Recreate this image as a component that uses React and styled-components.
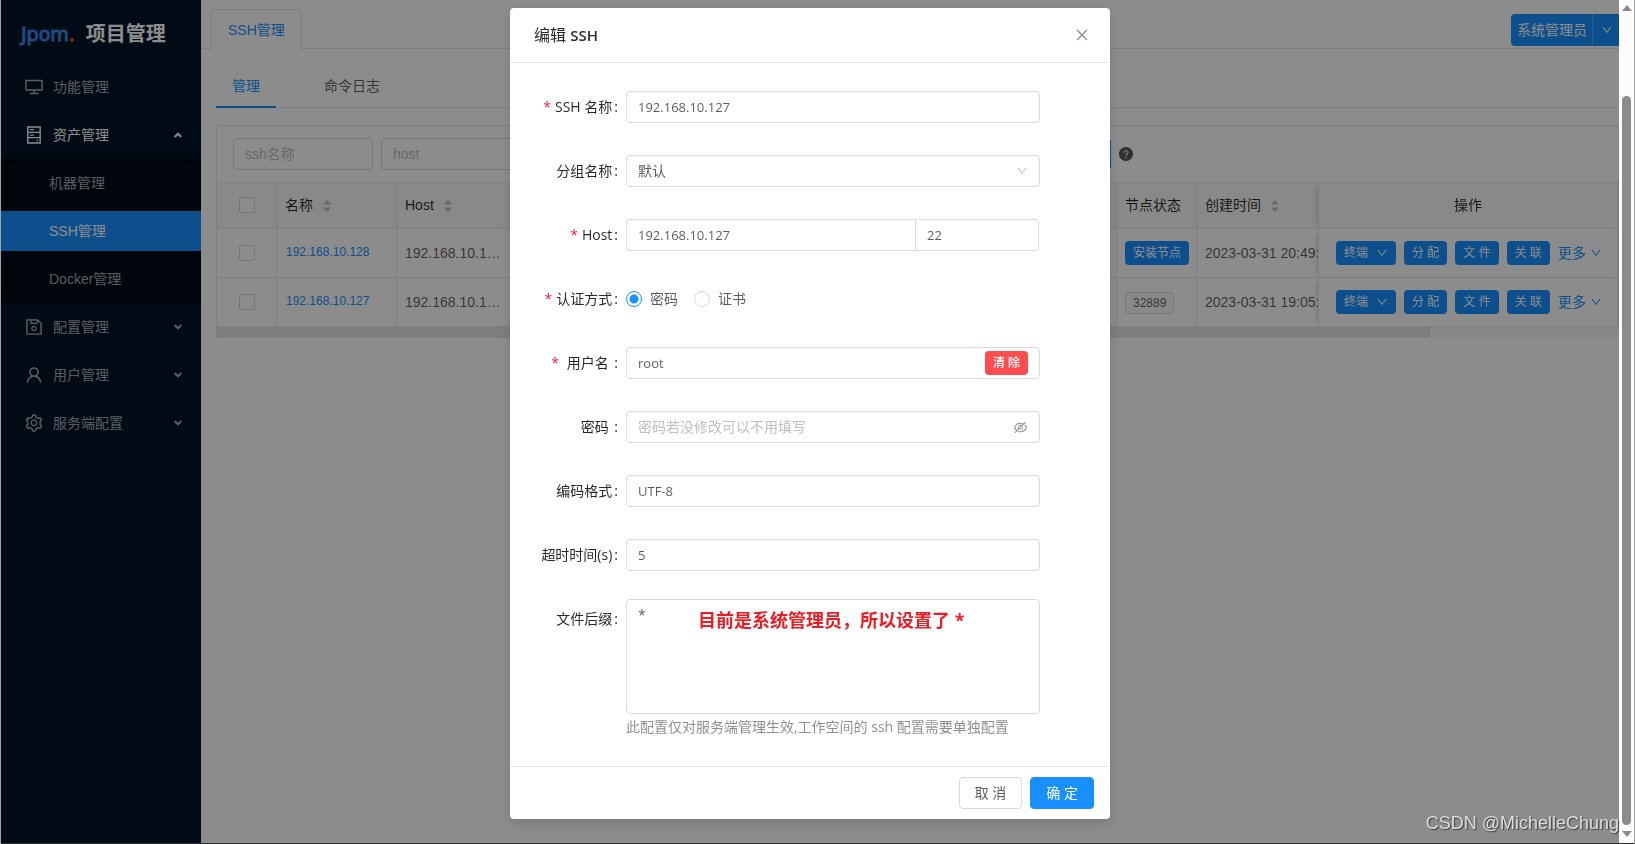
import React, { useState } from "react";
import styled, { createGlobalStyle } from "styled-components";
import {
  AiOutlineClose,
  AiOutlineDesktop,
  AiOutlineDown,
  AiOutlineEyeInvisible,
  AiOutlineHdd,
  AiOutlineSave,
  AiOutlineSetting,
  AiOutlineUser,
  AiFillQuestionCircle,
} from "react-icons/ai";

const menus = [
  { name: "功能管理", icon: AiOutlineDesktop },
  {
    name: "资产管理",
    icon: AiOutlineHdd,
    open: true,
    children: ["机器管理", "SSH管理", "Docker管理"],
  },
  { name: "配置管理", icon: AiOutlineSave, children: [] },
  { name: "用户管理", icon: AiOutlineUser, children: [] },
  { name: "服务端配置", icon: AiOutlineSetting, children: [] },
];

const machines = [
  { name: "192.168.10.128", host: "192.168.10.128", time: "2023-03-31 20:49:12" },
  { name: "192.168.10.127", host: "192.168.10.127", port: "32889", time: "2023-03-31 19:05:36" },
];

const Arrow = ({ up }) => (
  <ArrowSvg viewBox="0 0 8 6" width="8" height="6" fill="none" stroke="currentColor" strokeWidth="2">
    <path d={up ? "M0.7 5 L4 1.7 L7.3 5" : "M0.7 1 L4 4.3 L7.3 1"} />
  </ArrowSvg>
);

const Sorter = () => (
  <SorterSvg viewBox="0 0 8 14" width="8" height="14" fill="#bfbfbf">
    <path d="M4 1 L8 5.5 H0 Z M4 13 L8 8.5 H0 Z" />
  </SorterSvg>
);

const Sidebar = () => (
  <Side>
    <Brand>
      <Logo>
        Jpom<i>.</i>
      </Logo>
      <BrandTitle>项目管理</BrandTitle>
    </Brand>
    <Menu>
      {menus.map(({ name, icon: Icon, open, children }) => (
        <React.Fragment key={name}>
          <MenuItem type="button" $active={open}>
            <Icon size={20} />
            <span>{name}</span>
            {children && <Arrow up={open} />}
          </MenuItem>
          {open && (
            <SubMenu>
              {children.map((child) => (
                <SubItem href="#" key={child} $active={child === "SSH管理"}>
                  {child}
                </SubItem>
              ))}
            </SubMenu>
          )}
        </React.Fragment>
      ))}
    </Menu>
  </Side>
);

const MachineTable = () => (
  <TableBox>
    <Toolbar>
      <SearchInput aria-label="ssh名称" placeholder="ssh名称" />
      <SearchInput aria-label="host" placeholder="host" />
      <ToolbarEnd>
        <ToolButton type="button" aria-label="搜索" />
        <AiFillQuestionCircle size={16} />
      </ToolbarEnd>
    </Toolbar>
    <Scroller>
      <Table>
        <colgroup>
          <col width="60" />
          <col width="120" />
          <col width="120" />
          <col width="600" />
          <col width="80" />
          <col width="180" />
          <col width="299" />
        </colgroup>
        <thead>
          <tr>
            <Th $center>
              <CheckBox aria-label="全选" />
            </Th>
            <Th>
              名称
              <Sorter />
            </Th>
            <Th>
              Host
              <Sorter />
            </Th>
            <Th />
            <Th>节点状态</Th>
            <Th>
              创建时间
              <Sorter />
            </Th>
            <Th $center $fixed>
              操作
            </Th>
          </tr>
        </thead>
        <tbody>
          {machines.map((m) => (
            <tr key={m.name}>
              <Td $center>
                <CheckBox aria-label={m.name} />
              </Td>
              <Td>
                <NameLink href="#">{m.name}</NameLink>
              </Td>
              <Td $ellipsis>{m.host}</Td>
              <Td />
              <Td>{m.port ? <Tag>{m.port}</Tag> : <SmallButton type="button">安装节点</SmallButton>}</Td>
              <Td>{m.time}</Td>
              <Td $fixed>
                <Actions>
                  <SmallButton type="button">
                    终端
                    <AiOutlineDown size={12} />
                  </SmallButton>
                  <SmallButton type="button">分 配</SmallButton>
                  <SmallButton type="button">文 件</SmallButton>
                  <SmallButton type="button">关 联</SmallButton>
                  <More href="#">
                    更多
                    <AiOutlineDown size={12} />
                  </More>
                </Actions>
              </Td>
            </tr>
          ))}
        </tbody>
      </Table>
    </Scroller>
    <HScroll>
      <HThumb />
    </HScroll>
  </TableBox>
);

const FormItem = ({ label, id, required, children }) => (
  <Item>
    <Label htmlFor={id} $required={required}>
      {label}
    </Label>
    <Control>{children}</Control>
  </Item>
);

const EditModal = () => {
  const [auth, setAuth] = useState("PASS");

  return (
    <Modal role="dialog" aria-labelledby="title">
      <ModalHeader>
        <ModalTitle id="title">
          编辑 <b>SSH</b>
        </ModalTitle>
        <CloseButton type="button" aria-label="关闭">
          <AiOutlineClose size={16} />
        </CloseButton>
      </ModalHeader>
      <ModalBody>
        <FormItem label="SSH 名称" id="name" required>
          <Input id="name" defaultValue="192.168.10.127" />
        </FormItem>
        <FormItem label="分组名称" id="group">
          <Select id="group">
            <option>默认</option>
          </Select>
          <Suffix $faint>
            <AiOutlineDown size={12} />
          </Suffix>
        </FormItem>
        <FormItem label="Host" id="host" required>
          <HostGroup>
            <Input id="host" defaultValue="192.168.10.127" />
            <Input aria-label="端口" defaultValue="22" />
          </HostGroup>
        </FormItem>
        <FormItem label="认证方式" id="pass" required>
          <RadioLabel>
            <Radio id="pass" name="auth" checked={auth === "PASS"} onChange={() => setAuth("PASS")} />
            密码
          </RadioLabel>
          <RadioLabel>
            <Radio name="auth" checked={auth === "PUBKEY"} onChange={() => setAuth("PUBKEY")} />
            证书
          </RadioLabel>
        </FormItem>
        <FormItem label=" 用户名 " id="user" required>
          <Input id="user" defaultValue="root" />
          <Suffix>
            <SmallButton type="button" $danger>
              清 除
            </SmallButton>
          </Suffix>
        </FormItem>
        <FormItem label="密码 " id="password">
          <Input id="password" type="password" placeholder="密码若没修改可以不用填写" />
          <Suffix>
            <AiOutlineEyeInvisible size={15} />
          </Suffix>
        </FormItem>
        <FormItem label="编码格式" id="charset">
          <Input id="charset" defaultValue="UTF-8" />
        </FormItem>
        <FormItem label="超时时间(s)" id="timeout">
          <Input id="timeout" defaultValue="5" />
        </FormItem>
        <FormItem label="文件后缀" id="suffix">
          <TextArea id="suffix" defaultValue="*" />
          <Note>目前是系统管理员，所以设置了 *</Note>
          <Hint>此配置仅对服务端管理生效,工作空间的 ssh 配置需要单独配置</Hint>
        </FormItem>
      </ModalBody>
      <ModalFooter>
        <Button type="button">取 消</Button>
        <Button type="button" $primary>
          确 定
        </Button>
      </ModalFooter>
    </Modal>
  );
};

const App = () => (
  <Frame>
    <GlobalStyle />
    <Page>
      <Sidebar />
      <Main>
        <TopBar>
          <CardTab type="button">SSH管理</CardTab>
          <UserGroup>
            <UserButton type="button">系统管理员</UserButton>
            <UserButton type="button" $arrow aria-label="展开">
              <AiOutlineDown size={12} />
            </UserButton>
          </UserGroup>
        </TopBar>
        <Content>
          <Tabs>
            <Tab type="button" $active>
              管理
            </Tab>
            <Tab type="button">命令日志</Tab>
          </Tabs>
          <MachineTable />
        </Content>
      </Main>
      <Mask>
        <EditModal />
      </Mask>
      <Watermark>CSDN @MichelleChung</Watermark>
    </Page>
    <VScroll>
      <svg viewBox="0 0 10 6" width="10" height="6" fill="#8b8b8b">
        <path d="M5 0 L10 6 H0 Z" />
      </svg>
      <VThumb />
      <svg viewBox="0 0 10 6" width="10" height="6" fill="#8b8b8b">
        <path d="M5 6 L10 0 H0 Z" />
      </svg>
    </VScroll>
  </Frame>
);

const GlobalStyle = createGlobalStyle`
  * {
    box-sizing: border-box;
  }
  body {
    margin: 0;
    font-family: "Liberation Sans", "Noto Sans CJK SC", sans-serif;
    font-size: 14px;
    line-height: 22px;
    color: rgba(0, 0, 0, 0.65);
  }
  button, input, select, textarea {
    font: inherit;
    color: inherit;
    margin: 0;
  }
  button {
    cursor: pointer;
  }
  a {
    text-decoration: none;
  }
`;

const Frame = styled.div`
  display: flex;
  height: 100vh;
  border: solid #a3a3a3;
  border-width: 0 1px 0 1px;
  overflow: hidden;
  box-shadow: inset 0 -1px #2e2c30;
  padding-bottom: 1px;
`;

const Page = styled.div`
  position: relative;
  display: flex;
  flex: 1;
  min-width: 0;
  background: #fff;
`;

/* sidebar */

const Side = styled.aside`
  width: 200px;
  flex-shrink: 0;
  background: #001529;
`;

const Brand = styled.div`
  display: flex;
  align-items: center;
  gap: 11px;
  height: 63px;
  padding: 4px 20px 0;
`;

const Logo = styled.span`
  font-family: "DejaVu Sans", sans-serif;
  font-size: 19px;
  -webkit-text-stroke: 1px;
  color: #3d87e8;
  i {
    font-style: normal;
    color: #e8590c;
  }
`;

const BrandTitle = styled.h1`
  margin: 0;
  font-size: 20px;
  font-weight: 700;
  color: #fff;
  white-space: nowrap;
`;

const Menu = styled.nav`
  display: flex;
  flex-direction: column;
`;

const MenuItem = styled.button`
  display: flex;
  align-items: center;
  gap: 9px;
  width: 100%;
  height: 40px;
  margin: 4px 0;
  padding: 0 19px 0 23px;
  border: none;
  background: none;
  text-align: left;
  color: ${({ $active }) => ($active ? "#fff" : "rgba(255, 255, 255, 0.65)")};
`;

const ArrowSvg = styled.svg`
  margin-left: auto;
`;

const SubMenu = styled.div`
  display: flow-root;
  background: #000c17;
  box-shadow: inset 0 2px 8px rgba(0, 0, 0, 0.45);
`;

const SubItem = styled.a`
  display: block;
  height: 40px;
  margin: 4px 0 8px;
  padding-left: 48px;
  line-height: 40px;
  color: ${({ $active }) => ($active ? "#fff" : "rgba(255, 255, 255, 0.65)")};
  background: ${({ $active }) => ($active ? "#1890ff" : "none")};
  &:last-child {
    margin-bottom: 4px;
  }
`;

/* page header and tabs */

const Main = styled.main`
  flex: 1;
  min-width: 0;
`;

const TopBar = styled.header`
  display: flex;
  align-items: flex-end;
  justify-content: space-between;
  height: 49px;
  padding-left: 10px;
  border-bottom: 1px solid #e8e8e8;
`;

const CardTab = styled.button`
  height: 40px;
  margin-bottom: -1px;
  padding: 0 16px;
  border: 1px solid #e8e8e8;
  border-bottom: none;
  border-radius: 4px 4px 0 0;
  background: #fff;
  color: #1890ff;
`;

const UserGroup = styled.div`
  display: flex;
  margin-bottom: 2px;
`;

const UserButton = styled.button`
  display: flex;
  align-items: center;
  justify-content: center;
  height: 32px;
  width: ${({ $arrow }) => ($arrow ? "27px" : "auto")};
  padding: 0 5px 0 6px;
  border: none;
  border-left: ${({ $arrow }) => ($arrow ? "1px solid #40a9ff" : "none")};
  border-radius: ${({ $arrow }) => ($arrow ? "0" : "4px 0 0 4px")};
  background: #1890ff;
  color: #fff;
`;

const Content = styled.section`
  padding: 13px 0 0 15px;
`;

const Tabs = styled.div`
  display: flex;
  gap: 32px;
  margin-bottom: 17px;
  box-shadow: inset 0 -1px #e8e8e8;
`;

const Tab = styled.button`
  height: 46px;
  padding: 2px 16px 0;
  border: solid transparent;
  border-width: 2px 0;
  border-bottom-color: ${({ $active }) => ($active ? "#1890ff" : "transparent")};
  background: none;
  color: ${({ $active }) => ($active ? "#1890ff" : "inherit")};
`;

/* table */

const TableBox = styled.div`
  border: 1px solid #e8e8e8;
  border-bottom: none;
  border-radius: 4px 4px 0 0;
`;

const Toolbar = styled.div`
  display: flex;
  align-items: center;
  gap: 8px;
  padding: 12px 16px;
  border-bottom: 1px solid #e8e8e8;
`;

const SearchInput = styled.input`
  width: 140px;
  height: 32px;
  padding: 4px 11px;
  border: 1px solid #d9d9d9;
  border-radius: 4px;
  &::placeholder {
    color: #bfbfbf;
  }
`;

const ToolbarEnd = styled.div`
  display: flex;
  align-items: center;
  gap: 7px;
  margin-left: 517px;
`;

const ToolButton = styled.button`
  width: 65px;
  height: 28px;
  border: none;
  background: #1890ff;
`;

const Scroller = styled.div`
  overflow: hidden;
`;

const Table = styled.table`
  width: 100%;
  min-width: 1459px;
  table-layout: fixed;
  border-spacing: 0;
`;

const Th = styled.th`
  position: ${({ $fixed }) => ($fixed ? "sticky" : "static")};
  right: 0;
  height: 46px;
  padding: 0 8px 2px;
  border: solid #e8e8e8;
  border-width: 0 1px 1px 0;
  background: #fafafa;
  font-weight: 400;
  text-align: ${({ $center }) => ($center ? "center" : "left")};
  color: rgba(0, 0, 0, 0.85);
  box-shadow: ${({ $fixed }) => ($fixed ? "-1px 0 #e8e8e8, -6px 0 6px -4px rgba(0, 0, 0, 0.15)" : "none")};
`;

const Td = styled.td`
  position: ${({ $fixed }) => ($fixed ? "sticky" : "static")};
  right: 0;
  height: 49px;
  padding: 0 8px;
  padding-right: ${({ $ellipsis }) => ($ellipsis ? "14px" : "8px")};
  border: solid #e8e8e8;
  border-width: 0 1px 1px 0;
  background: #fff;
  text-align: ${({ $center }) => ($center ? "center" : "left")};
  white-space: nowrap;
  overflow: ${({ $ellipsis }) => ($ellipsis ? "hidden" : "visible")};
  text-overflow: ellipsis;
  box-shadow: ${({ $fixed }) => ($fixed ? "-1px 0 #e8e8e8, -6px 0 6px -4px rgba(0, 0, 0, 0.15)" : "none")};
`;

const SorterSvg = styled.svg`
  margin-left: 10px;
  vertical-align: middle;
`;

const CheckBox = styled.input.attrs({ type: "checkbox" })`
  appearance: none;
  display: block;
  width: 16px;
  height: 16px;
  margin: 0 auto;
  border: 1px solid #d9d9d9;
  border-radius: 2px;
  background: #fff;
`;

const NameLink = styled.a`
  display: block;
  padding: 0 0 3px 1px;
  font-size: 12px;
  color: #1890ff;
`;

const SmallButton = styled.button`
  display: inline-flex;
  align-items: center;
  gap: 8px;
  height: 24px;
  padding: 0 8px;
  border: none;
  border-radius: 4px;
  background: ${({ $danger }) => ($danger ? "#ff4d4f" : "#1890ff")};
  color: #fff;
  font-size: 12px;
  font-weight: ${({ $danger }) => ($danger ? "500" : "400")};
  line-height: 20px;
  vertical-align: middle;
`;

const Tag = styled.span`
  display: inline-block;
  height: 22px;
  padding: 0 7px;
  border: 1px solid #d9d9d9;
  border-radius: 4px;
  background: #fafafa;
  font-size: 12px;
  line-height: 20px;
`;

const Actions = styled.div`
  display: flex;
  align-items: center;
  gap: 8px;
  padding-left: 9px;
`;

const More = styled.a`
  display: flex;
  align-items: center;
  gap: 4px;
  color: #1890ff;
`;

const HScroll = styled.div`
  height: 11px;
  margin: 0 -1px;
  background: #f8f8f8;
`;

const HThumb = styled.div`
  width: calc(100% * 1214 / 1403);
  height: 100%;
  border-radius: 0 0 2px 2px;
  background: #e6e6e6;
`;

/* modal */

const Mask = styled.div`
  position: absolute;
  inset: 0;
  z-index: 10;
  display: flex;
  align-items: flex-start;
  justify-content: center;
  padding-top: 8px;
  background: rgba(0, 0, 0, 0.45);
`;

const Modal = styled.div`
  width: 600px;
  border-radius: 4px;
  background: #fff;
  box-shadow: 0 4px 12px rgba(0, 0, 0, 0.15);
  font-family: "Open Sans", "Noto Sans CJK SC", sans-serif;
`;

const ModalHeader = styled.div`
  display: flex;
  align-items: center;
  justify-content: space-between;
  padding: 16px 20px 16px 24px;
  border-bottom: 1px solid #e8e8e8;
`;

const ModalTitle = styled.h2`
  margin: 0;
  font-size: 16px;
  font-weight: 400;
  line-height: 22px;
  color: rgba(0, 0, 0, 0.85);
  b {
    font-size: 15px;
    font-weight: 600;
  }
`;

const CloseButton = styled.button`
  display: flex;
  padding: 0;
  border: none;
  background: none;
  color: rgba(0, 0, 0, 0.45);
`;

const ModalBody = styled.div`
  padding: 24px 24px 0;
`;

const Item = styled.div`
  display: flex;
  margin-bottom: 24px;
`;

const Label = styled.label`
  width: 16.6667%;
  flex-shrink: 0;
  line-height: 40px;
  text-align: right;
  white-space: pre;
  color: rgba(0, 0, 0, 0.85);
  &::before {
    content: ${({ $required }) => ($required ? '"*"' : "none")};
    margin-right: 4px;
    color: #f5222d;
  }
  &::after {
    content: ":";
    margin: 0 8px 0 2px;
  }
`;

const Control = styled.div`
  position: relative;
  display: flex;
  flex-wrap: wrap;
  align-items: center;
  width: 75%;
  min-height: 40px;
`;

const Input = styled.input`
  width: 100%;
  height: 32px;
  padding: 4px 11px;
  border: 1px solid #d9d9d9;
  border-radius: 4px;
  background: #fff;
  font-size: 13px;
  &::placeholder {
    font-size: 14px;
    color: #bfbfbf;
  }
`;

const Select = styled.select`
  appearance: none;
  width: 100%;
  height: 32px;
  padding: 0 11px;
  border: 1px solid #d9d9d9;
  border-radius: 4px;
  background: #fff;
`;

const Suffix = styled.span`
  position: absolute;
  right: 12px;
  display: flex;
  color: ${({ $faint }) => ($faint ? "rgba(0, 0, 0, 0.25)" : "rgba(0, 0, 0, 0.45)")};
  pointer-events: ${({ $faint }) => ($faint ? "none" : "auto")};
`;

const HostGroup = styled.div`
  display: grid;
  grid-template-columns: 7fr 3fr;
  width: 100%;
  padding-right: 1px;
  ${Input}:first-child {
    border-right: none;
    border-radius: 4px 0 0 4px;
  }
  ${Input}:last-child {
    border-radius: 0 4px 4px 0;
  }
`;

const RadioLabel = styled.label`
  display: flex;
  align-items: center;
  gap: 8px;
  margin-right: 16px;
`;

const Radio = styled.input.attrs({ type: "radio" })`
  appearance: none;
  width: 16px;
  height: 16px;
  border: 1px solid #d9d9d9;
  border-radius: 50%;
  background: #fff;
  &:checked {
    border-color: #1890ff;
    background: radial-gradient(#1890ff 4px, #fff 5px);
  }
`;

const TextArea = styled.textarea`
  display: block;
  width: 100%;
  height: 115px;
  padding: 4px 11px;
  border: 1px solid #d9d9d9;
  border-radius: 4px;
  resize: none;
`;

const Note = styled.strong`
  position: absolute;
  top: 8px;
  left: 72px;
  font-size: 18px;
  line-height: 26px;
  white-space: nowrap;
  color: #ed1c24;
`;

const Hint = styled.div`
  padding: 2px 0 4px;
  color: rgba(0, 0, 0, 0.45);
`;

const ModalFooter = styled.div`
  display: flex;
  justify-content: flex-end;
  gap: 8px;
  padding: 10px 16px;
  border-top: 1px solid #e8e8e8;
`;

const Button = styled.button`
  height: 32px;
  padding: 0 15px;
  border: 1px solid ${({ $primary }) => ($primary ? "#1890ff" : "#d9d9d9")};
  border-radius: 4px;
  background: ${({ $primary }) => ($primary ? "#1890ff" : "#fff")};
  color: ${({ $primary }) => ($primary ? "#fff" : "inherit")};
`;

/* window scrollbar and watermark */

const VScroll = styled.div`
  display: flex;
  flex-direction: column;
  align-items: center;
  width: 15px;
  padding: 5px 0 6px;
  background: #fcfcfc;
`;

const VThumb = styled.div`
  flex: 1;
  width: 9px;
  margin: 85px 0 6px;
  border-radius: 5px;
  background: #8b8b8b;
`;

const Watermark = styled.div`
  position: absolute;
  right: 0;
  bottom: 8px;
  z-index: 20;
  font-size: 18px;
  line-height: 24px;
  color: #dcdcdc;
  text-shadow: 1px 1px 1px rgba(0, 0, 0, 0.6);
`;

export default App;
